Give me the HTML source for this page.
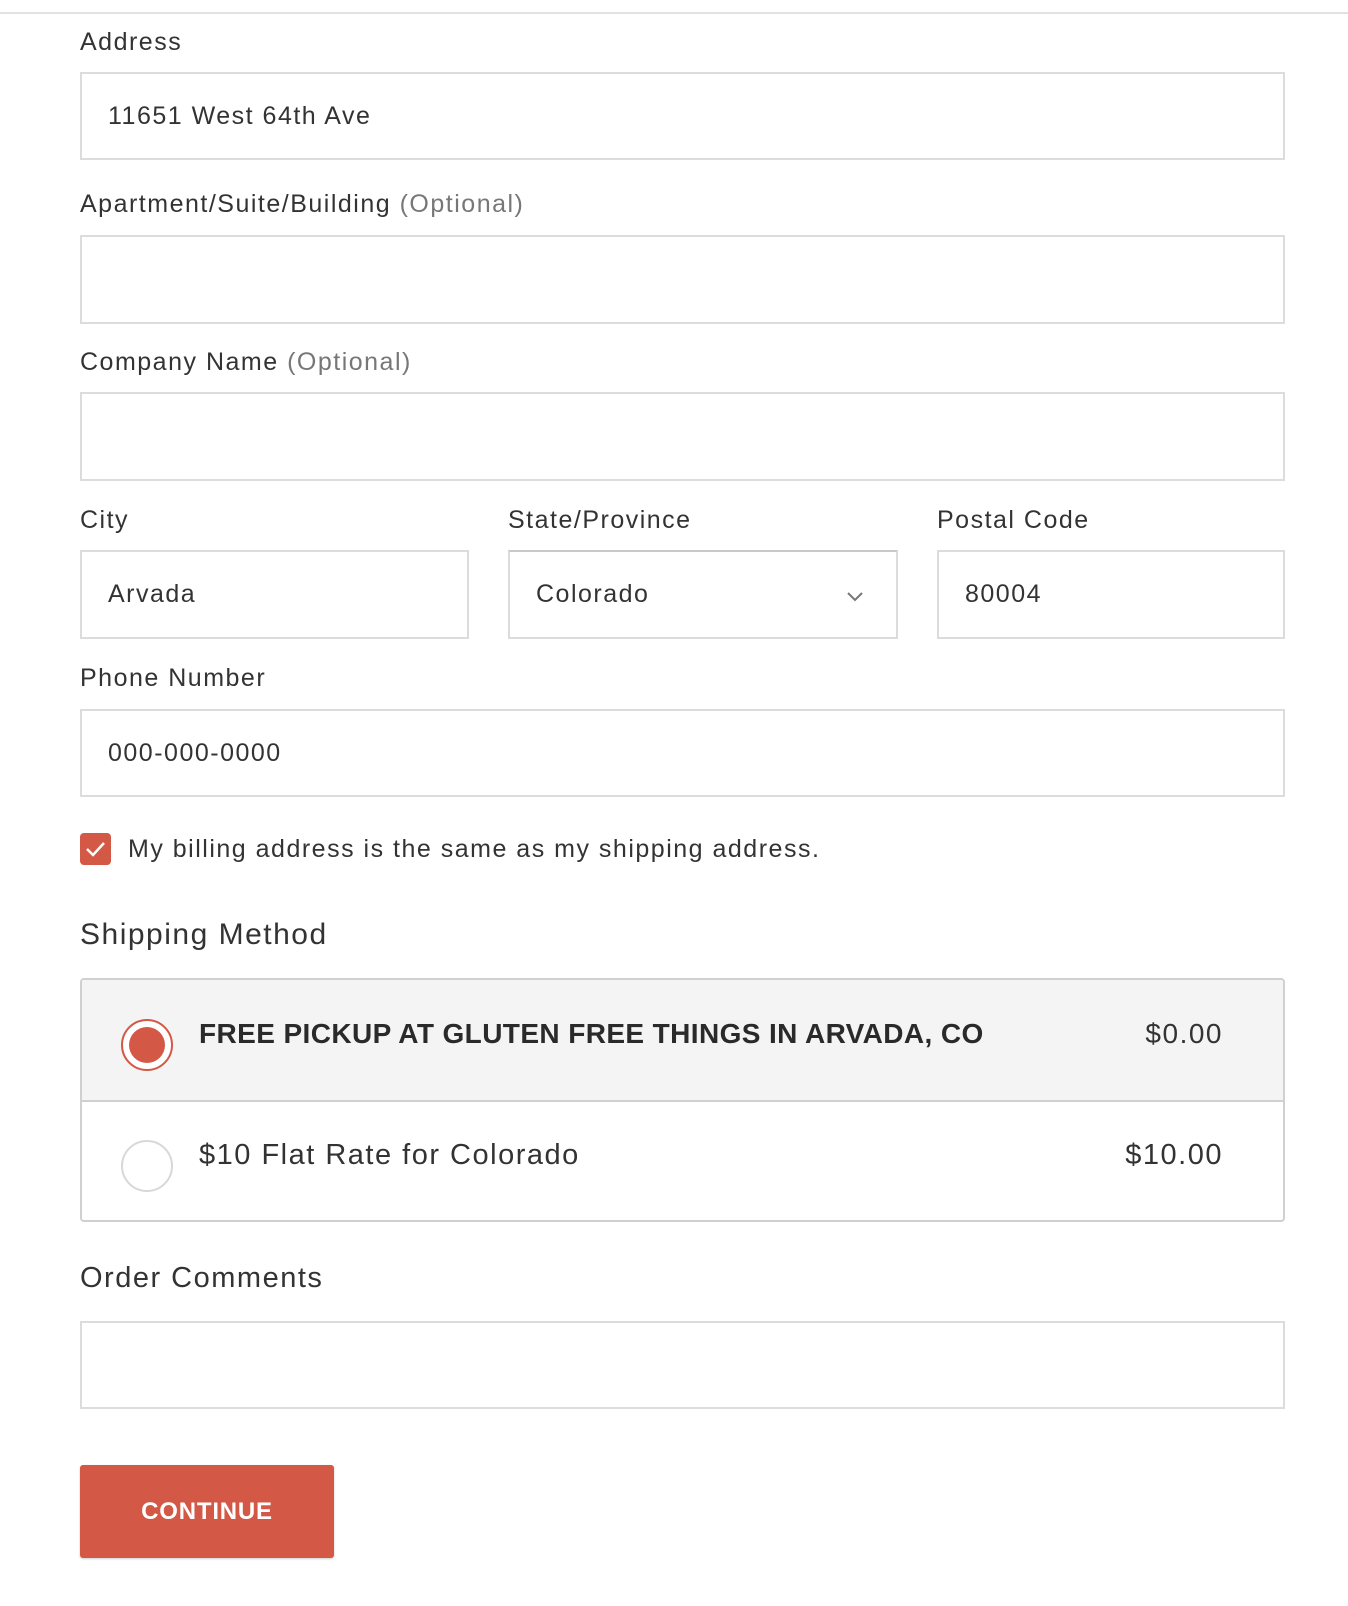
<!DOCTYPE html>
<html><head><meta charset="utf-8"><style>
*{box-sizing:border-box;margin:0;padding:0}
body{width:1348px;height:1606px;background:#fff;font-family:"Liberation Sans",sans-serif;color:#333;position:relative;overflow:hidden;letter-spacing:1.5px}
.a{position:absolute}
.line{left:0;top:12px;width:1348px;height:2px;background:#e2e2e2}
.lbl{font-size:25px;line-height:30px;transform:translateY(-15px);white-space:nowrap}
.opt{color:#777}
.inp{border:2px solid #dcdcdc;background:#fff;font-size:25px;padding-left:26px;display:flex;align-items:center}
.btn{background:#d35845;color:#fff;font-weight:bold;font-size:24px;display:flex;align-items:center;justify-content:center;border-radius:3px;box-shadow:0 1px 2px rgba(0,0,0,.2);letter-spacing:0.8px}
</style></head><body>
<div class="a line"></div>
<div class="a lbl" style="left:80px;top:42px">Address</div>
<div class="a inp" style="left:80px;top:72px;width:1205px;height:88px">11651 West 64th Ave</div>
<div class="a lbl" style="left:80px;top:204px">Apartment/Suite/Building <span class="opt">(Optional)</span></div>
<div class="a inp" style="left:80px;top:235px;width:1205px;height:89px"></div>
<div class="a lbl" style="left:80px;top:362px">Company Name <span class="opt">(Optional)</span></div>
<div class="a inp" style="left:80px;top:392px;width:1205px;height:89px"></div>
<div class="a lbl" style="left:80px;top:520px">City</div>
<div class="a lbl" style="left:508px;top:520px">State/Province</div>
<div class="a lbl" style="left:937px;top:520px">Postal Code</div>
<div class="a inp" style="left:80px;top:550px;width:389px;height:89px">Arvada</div>
<div class="a inp" style="left:508px;top:550px;width:390px;height:89px;border-top-color:#c8c8c8">Colorado
<svg style="position:absolute;right:32px;top:38px" width="18" height="12" viewBox="0 0 18 12"><path d="M2 3l7 7 7-7" fill="none" stroke="#777" stroke-width="2"/></svg></div>
<div class="a inp" style="left:937px;top:550px;width:348px;height:89px">80004</div>
<div class="a lbl" style="left:80px;top:678px">Phone Number</div>
<div class="a inp" style="left:80px;top:709px;width:1205px;height:88px">000-000-0000</div>
<div class="a" style="left:80px;top:833px;width:31px;height:32px;background:#d35845;border-radius:4px">
<svg width="31" height="32" viewBox="0 0 31 32"><path d="M7 16l6 6 11-12" fill="none" stroke="#fff" stroke-width="2.5"/></svg></div>
<div class="a lbl" style="left:128px;top:849px">My billing address is the same as my shipping address.</div>
<div class="a" style="left:80px;top:917px;font-size:30px;line-height:36px">Shipping Method</div>
<div class="a" style="left:80px;top:978px;width:1205px;height:244px;border:2px solid #d0d0d0;border-radius:4px;overflow:hidden">
<div style="height:122px;background:#f4f4f4;border-bottom:2px solid #d0d0d0;position:relative">
<div class="a" style="left:39px;top:39px;width:52px;height:52px;border:2px solid #d35845;border-radius:50%;background:#fff"><div style="margin:6px;width:36px;height:36px;border-radius:50%;background:#d35845"></div></div>
<div class="a" style="left:117px;top:37px;font-size:28px;font-weight:bold;line-height:34px;color:#2a2a2a;letter-spacing:0.4px">FREE PICKUP AT GLUTEN FREE THINGS IN ARVADA, CO</div>
<div class="a" style="right:60px;top:37px;font-size:28px;line-height:34px">$0.00</div>
</div>
<div style="position:relative;height:120px">
<div class="a" style="left:39px;top:38px;width:52px;height:52px;border:2px solid #d8d8d8;border-radius:50%"></div>
<div class="a" style="left:117px;top:36px;font-size:29px;line-height:34px">$10 Flat Rate for Colorado</div>
<div class="a" style="right:60px;top:36px;font-size:29px;line-height:34px">$10.00</div>
</div></div>
<div class="a" style="left:80px;top:1260px;font-size:29px;line-height:36px">Order Comments</div>
<div class="a inp" style="left:80px;top:1321px;width:1205px;height:88px"></div>
<div class="a btn" style="left:80px;top:1465px;width:254px;height:93px">CONTINUE</div>
</body></html>
